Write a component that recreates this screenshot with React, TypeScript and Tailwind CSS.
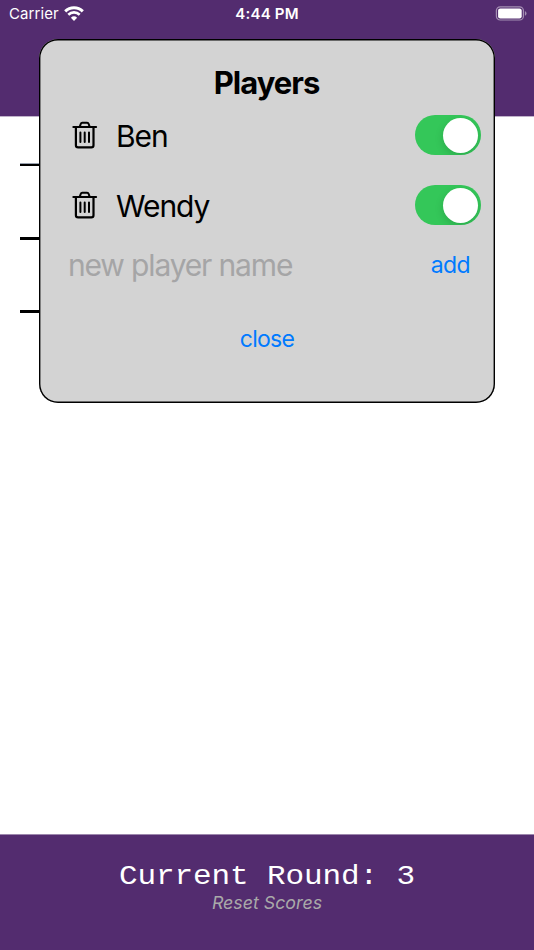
import { useState } from "react";

type Player = {
  name: string;
  active: boolean;
};

const WifiIcon = () => (
  <svg width="20" height="16" viewBox="0 0 20 16" fill="none">
    <path d="M1.2 5.4 A12.6 12.6 0 0 1 18.8 5.4" stroke="white" strokeWidth="3" />
    <path d="M4.3 8.7 A8.2 8.2 0 0 1 15.7 8.7" stroke="white" strokeWidth="2.6" />
    <path d="M10 15 L6.9 11.8 A4.5 4.5 0 0 1 13.1 11.8 Z" fill="white" />
  </svg>
);

const BatteryIcon = () => (
  <svg width="32" height="16" viewBox="0 0 32 16" fill="none">
    <rect x="1.4" y="0.8" width="27" height="13.2" rx="3.8" stroke="#a48fb3" strokeWidth="1.2" />
    <rect x="3.1" y="2.4" width="23.6" height="10" rx="2.2" fill="white" />
    <path d="M29.9 5.1 Q31.5 5.8 31.5 7.4 Q31.5 9 29.9 9.7 Z" fill="#a48fb3" />
  </svg>
);

const TrashIcon = () => (
  <svg width="26" height="28" viewBox="0 0 26 28" fill="none" stroke="black" strokeLinecap="round" strokeLinejoin="round">
    <path d="M1.3 5.9 H24.1" strokeWidth="2" />
    <path d="M7.9 5.4 L8.7 3 Q9.1 1.8 10.3 1.8 H15.1 Q16.3 1.8 16.7 3 L17.5 5.4" strokeWidth="2" />
    <path d="M3.9 6 V24.2 Q3.9 26.4 6.1 26.4 H19.3 Q21.5 26.4 21.5 24.2 V6" strokeWidth="2.2" />
    <path d="M8.4 11.6 V21 M12.7 11.6 V21 M17 11.6 V21" strokeWidth="2" />
  </svg>
);

const StatusBar = () => (
  <div className="flex h-7 items-center text-white">
    <div className="flex flex-1 items-center pl-[9px]">
      <span className="pt-px text-[15px] tracking-[0.1px]">Carrier</span>
      <span className="ml-[5px]">
        <WifiIcon />
      </span>
    </div>
    <span className="pt-px pr-[2px] text-[15px] font-semibold tracking-[0.2px]">4:44 PM</span>
    <div className="flex flex-1 justify-end pr-[7px]">
      <BatteryIcon />
    </div>
  </div>
);

const Switch = ({ on, onToggle }: { on: boolean; onToggle: () => void }) => (
  <button
    role="switch"
    aria-checked={on}
    onClick={onToggle}
    className={`flex h-10 w-[66px] items-center overflow-hidden rounded-full px-[3px] ${
      on ? "justify-end bg-[#34c759]" : "justify-start bg-gray-400"
    }`}
  >
    <span className="size-[35px] rounded-full bg-white shadow-[0_3px_8px_rgba(0,0,0,0.15)]" />
  </button>
);

const App: React.FC = () => {
  const [players, setPlayers] = useState<Player[]>([
    { name: "Ben", active: true },
    { name: "Wendy", active: true },
  ]);
  const [newName, setNewName] = useState("");
  const [open, setOpen] = useState(true);

  const togglePlayer = (index: number) => {
    setPlayers(players.map((p, i) => (i === index ? { ...p, active: !p.active } : p)));
  };

  const removePlayer = (index: number) => {
    setPlayers(players.filter((_, i) => i !== index));
  };

  const addPlayer = () => {
    if (!newName) return;
    setPlayers([...players, { name: newName, active: true }]);
    setNewName("");
  };

  return (
    <div className="relative flex h-[950px] w-[534px] flex-col overflow-hidden bg-white font-['Inter','Liberation_Sans',sans-serif]">
      <header className="h-[117px] shrink-0 border-b border-[#c0b2ca] bg-[#532c6f]">
        <StatusBar />
      </header>

      <main className="flex flex-1 flex-col px-5 pt-[46px]">
        <div className="h-[3px] w-60 border-t border-gray-400 bg-black" />
        <div className="mt-[71px] h-[3px] w-60 bg-black" />
        <div className="mt-[70px] h-[3px] w-60 bg-black" />
      </main>

      <footer className="flex h-[116px] shrink-0 flex-col items-center border-t border-[#9d87ad] bg-[#532c6f] pt-[24px]">
        <p className="scale-y-92 font-['Liberation_Mono',monospace] text-[31px] leading-[35px] tracking-[-0.1px] text-white">
          Current Round: 3
        </p>
        <button className="mt-[-2px] text-[17.8px] leading-[22px] text-[#a9a9a9] italic">Reset Scores</button>
      </footer>

      {open && (
        <div className="absolute top-[39px] left-[39px] flex h-[364px] w-[456px] flex-col rounded-[19px] bg-[#d3d3d3] p-px shadow-[inset_0_0_0_1.4px_black]">
          <h1 className="mt-[24px] pr-px text-center text-[31px] leading-[37px] font-bold tracking-[-1px]">
            Players
          </h1>
          <ul className="mt-[14px] flex flex-col gap-[30px]">
            {players.map((player, index) => (
              <li key={index} className="flex h-10 items-center pr-[13px] pl-8">
                <button onClick={() => removePlayer(index)}>
                  <TrashIcon />
                </button>
                <span className="ml-[18px] flex-1 pt-px text-[30px] leading-10 tracking-[-1.05px]">
                  {player.name}
                </span>
                <Switch on={player.active} onToggle={() => togglePlayer(index)} />
              </li>
            ))}
          </ul>
          <div className="mt-[20px] flex h-10 items-center justify-between pr-6 pl-7">
            <input
              value={newName}
              onChange={(e) => setNewName(e.target.value)}
              placeholder="new player name"
              className="h-10 w-[300px] text-[30px] tracking-[-1.15px] outline-none placeholder:text-[#a5a5a6]"
            />
            <button onClick={addPlayer} className="text-[23px] tracking-[-0.6px] text-[#007aff]">
              add
            </button>
          </div>
          <button
            onClick={() => setOpen(false)}
            className="mt-[39px] self-center text-[23px] leading-[30px] tracking-[-0.7px] text-[#007aff]"
          >
            close
          </button>
        </div>
      )}
    </div>
  );
};

export default App;
